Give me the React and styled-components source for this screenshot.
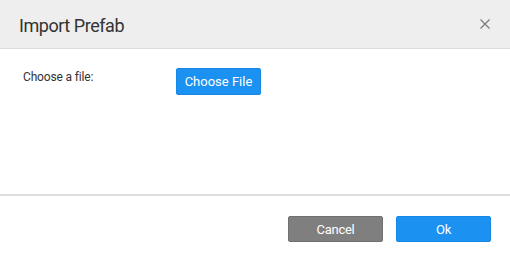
import React from 'react'
import styled, { createGlobalStyle } from 'styled-components'

const GlobalStyle = createGlobalStyle`
  html, body {
    margin: 0;
    padding: 0;
    background: #fff;
  }
  body {
    font-family: Roboto, "Liberation Sans", sans-serif;
  }
`

const Dialog = styled.div`
  width: 510px;
  height: 261px;
  display: flex;
  flex-direction: column;
  background: #fff;
`

const Header = styled.div`
  box-sizing: border-box;
  height: 49px;
  padding: 15px 19px 0 19px;
  background: #eeeeee;
  border-bottom: 1px solid #dcdcdc;
  display: flex;
  justify-content: space-between;
  align-items: flex-start;
`

const Title = styled.h1`
  margin: 0;
  font-size: 18px;
  line-height: 21px;
  font-weight: 400;
  letter-spacing: -0.45px;
  color: #333;
`

const Close = styled.button`
  border: 0;
  background: none;
  padding: 0;
  margin-top: 3px;
  width: 12px;
  height: 12px;
  cursor: pointer;
  display: flex;
`

const Body = styled.div`
  flex: 1;
  padding: 19px 23px 0;
  border-bottom: 2px solid #dedede;
`

const Row = styled.div`
  display: grid;
  grid-template-columns: 153px auto;
  align-items: start;
`

const Label = styled.label`
  font-size: 12px;
  line-height: 14px;
  padding-top: 2px;
  letter-spacing: -0.15px;
  color: #333;
`

const Button = styled.button`
  box-sizing: border-box;
  height: ${p => p.$h || 26}px;
  width: ${p => p.$w}px;
  padding: 0;
  border-radius: 2px;
  border: 1px solid ${p => (p.$variant === 'gray' ? '#707070' : '#1788e6')};
  background: ${p => (p.$variant === 'gray' ? '#7f7f7f' : '#1b92f2')};
  color: #fff;
  font-family: Roboto, "Liberation Sans", sans-serif;
  font-size: 13px;
  letter-spacing: ${p => (p.$tight ? '-0.3px' : '0')};
  cursor: pointer;
`

const Footer = styled.div`
  height: 65px;
  box-sizing: border-box;
  padding: 20px 19px 0 0;
  display: flex;
  justify-content: flex-end;
  align-items: flex-start;
  gap: 13px;
`

const App = () => (
  <>
    <GlobalStyle />
    <Dialog>
      <Header>
        <Title>Import Prefab</Title>
        <Close aria-label="Close">
          <svg width="12" height="12" viewBox="0 0 12 12">
            <path d="M1.5 1.5 L10.5 10.5 M10.5 1.5 L1.5 10.5" stroke="#7a7a7a" strokeWidth="1.2" fill="none" />
          </svg>
        </Close>
      </Header>
      <Body>
        <Row>
          <Label>Choose a file:</Label>
          <Button $w={85} $h={27}>Choose File</Button>
        </Row>
      </Body>
      <Footer>
        <Button $variant="gray" $w={95} $tight>Cancel</Button>
        <Button $w={95} $tight>Ok</Button>
      </Footer>
    </Dialog>
  </>
)

export default App
